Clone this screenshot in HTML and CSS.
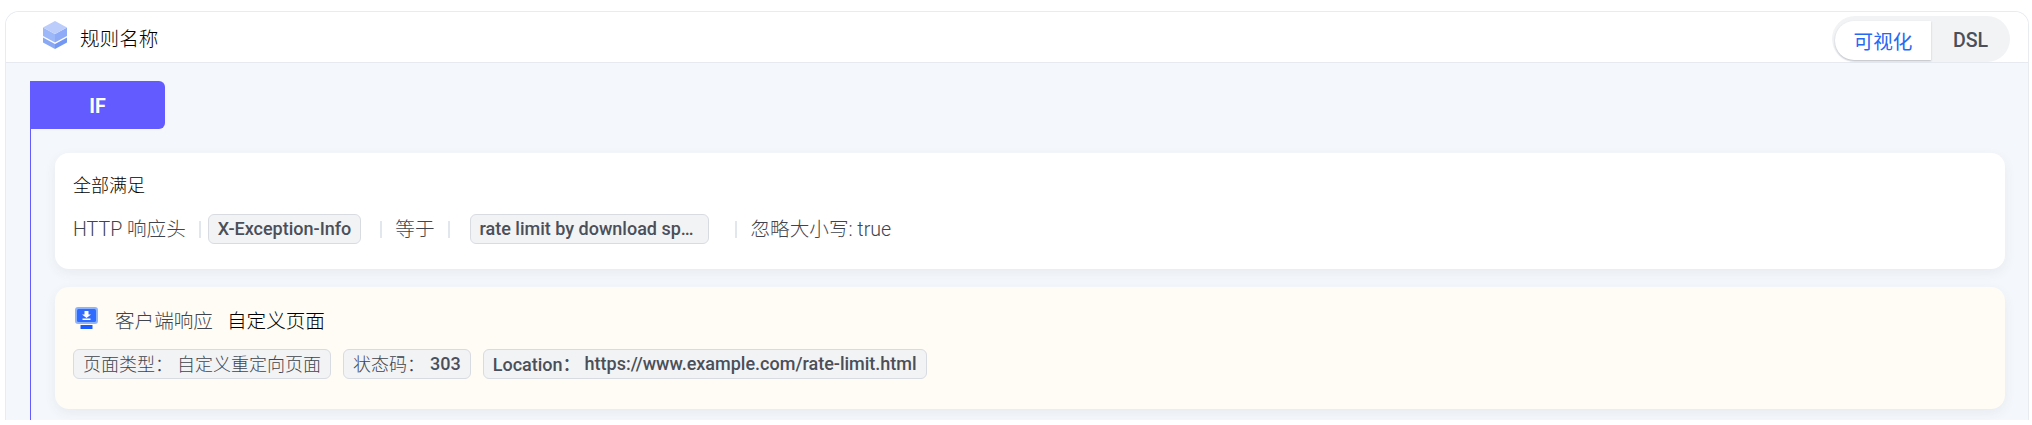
FILE: index.html
```html
<!DOCTYPE html>
<html lang="zh-CN">
<head>
  <meta charset="UTF-8">
  <title>规则详情</title>
  <link rel="stylesheet" href="styles.css">
</head>
<body>

<div class="rule-panel">
  <!-- Header -->
  <div class="rule-header">
    <div class="rule-title">
      <svg class="rule-icon" width="24" height="28" viewBox="0 0 24 28">
        <path d="M0 16.5 L12 23 L12 28 L0 21.5 Z" fill="#8aa9f5"/>
        <path d="M24 16.5 L12 23 L12 28 L24 21.5 Z" fill="#7398f3"/>
        <path d="M0 6.5 L12 13 L12 21.5 L0 15 Z" fill="#9db8f9"/>
        <path d="M24 6.5 L12 13 L12 21.5 L24 15 Z" fill="#8dabf7"/>
        <path d="M12 0 L24 6.5 L12 13 L0 6.5 Z" fill="#bccdfb"/>
      </svg>
      <span>规则名称</span>
    </div>
    <div class="view-switch">
      <div class="view-option active">可视化</div>
      <div class="view-option">DSL</div>
    </div>
  </div>

  <!-- Body -->
  <div class="rule-body">
    <div class="if-label">IF</div>
    <div class="if-branch">
      <div class="rule-card">
        <div class="card-title">全部满足</div>
        <div class="condition">
          <span class="cond-text">HTTP 响应头</span>
          <i class="sep sep-a"></i>
          <span class="tag">X-Exception-Info</span>
          <i class="sep sep-b"></i>
          <span class="cond-text">等于</span>
          <i class="sep sep-c"></i>
          <span class="tag tag-value">rate limit by download sp…</span>
          <i class="sep sep-d"></i>
          <span class="cond-text">忽略大小写: true</span>
        </div>
      </div>

      <div class="rule-card rule-card-action">
        <div class="action-title">
          <svg class="action-icon" width="23" height="22" viewBox="0 0 23 22">
            <rect x="0" y="0" width="23" height="17" rx="3" fill="#8fb4ff"/>
            <rect x="2" y="2" width="19" height="13" rx="1.5" fill="#2f6bff"/>
            <path d="M9.5 4 H13.5 V7.5 H16 L11.5 11 L7 7.500 H9.500 Z M7.500 11.500 H15.500 V13 H7.500 Z" fill="#fff"/>
            <rect x="5.500" y="18" width="12" height="4" rx="0.500" fill="#1a5cff"/>
          </svg>
          <span class="action-name">客户端响应</span>
          <span class="action-value">自定义页面</span>
        </div>
        <div class="tag-row">
          <span class="tag"><em>页面类型：</em><b class="tag-text">自定义重定向页面</b></span>
          <span class="tag"><em>状态码：</em><b>303</b></span>
          <span class="tag">Location：<b class="tag-url">https://www.example.com/rate-limit.html</b></span>
        </div>
      </div>
    </div>
  </div>
</div>

</body>
</html>
```
FILE: styles.css
```css
/* General styles */
html,
body {
  height: 100%;
}

body {
  margin: 0;
  padding: 11px 3px 6px 5px;
  box-sizing: border-box;
  background: #fff;
  font-family: Roboto, "Noto Sans CJK SC", sans-serif;
  overflow: hidden;
}

/* Outer panel */
.rule-panel {
  height: 408px;
  display: flex;
  flex-direction: column;
  border: 1px solid #e8ebf0;
  border-bottom: none;
  border-radius: 14px 14px 0 0;
  overflow: hidden;
}

/* Header */
.rule-header {
  height: 50px;
  flex: none;
  display: flex;
  align-items: center;
  justify-content: space-between;
  padding: 0 18px 0 37px;
  background: #fff;
  border-bottom: 1px solid #e6eaf0;
}

.rule-title {
  display: flex;
  align-items: center;
  gap: 13px;
  font-size: 19.6px;
  font-weight: 300;
  color: #000;
}

.rule-icon {
  margin-top: -4px;
}

/* View switch */
.view-switch {
  align-self: flex-end;
  display: flex;
  height: 46px;
  padding: 5px 0 2px;
  box-sizing: border-box;
  background: #f2f3f5;
  border-radius: 23px;
  font-size: 19.6px;
}

.view-option {
  width: 79px;
  display: flex;
  align-items: center;
  justify-content: center;
  color: #4a4f59;
  font-weight: 500;
}

.view-option.active {
  width: 96px;
  margin-left: 3px;
  background: #fff;
  color: #2568f5;
  font-weight: 400;
  border-radius: 19px 0 0 19px;
  box-shadow: 0 1px 2px rgba(60, 70, 90, 0.3);
}

/* Body */
.rule-body {
  flex: 1;
  padding: 18px 0 0 24px;
  background: #f4f7fb;
}

.if-label {
  width: 135px;
  height: 48px;
  padding-top: 3px;
  box-sizing: border-box;
  display: flex;
  align-items: center;
  justify-content: center;
  background: #635bff;
  color: #fff;
  font-size: 19.6px;
  font-weight: 700;
  border-radius: 0 6px 6px 0;
}

.if-branch {
  height: 290px;
  padding: 24px 23px 0 24px;
  border-left: 1px solid #635bff;
}

/* Cards */
.rule-card {
  padding: 20px 18px 0;
  height: 116px;
  box-sizing: border-box;
  background: #fff;
  border-radius: 14px;
  box-shadow: 0 4px 12px rgba(70, 90, 120, 0.07);
}

.rule-card-action {
  height: 122px;
  margin-top: 18px;
  padding-top: 18px;
  background: #fffcf5;
}

.card-title {
  font-size: 18px;
  font-weight: 300;
  line-height: 26px;
  color: #000;
}

.condition {
  display: flex;
  align-items: center;
  height: 30px;
  margin-top: 15px;
  font-size: 19.6px;
  color: #4a4f59;
}

.cond-text {
  margin-bottom: 3px;
  font-weight: 300;
  color: #3f444e;
}

.sep {
  width: 2px;
  height: 17px;
  background: #e2e6ed;
}

.sep-a {
  margin: 0 7px 0 13px;
}

.sep-b {
  margin: 0 13px 0 19px;
}

.sep-c {
  margin: 0 20px 0 13px;
}

.sep-d {
  margin: 0 14px 0 26px;
}

/* Tags */
.tag {
  display: inline-flex;
  align-items: center;
  height: 30px;
  box-sizing: border-box;
  padding: 0 9px 2px;
  background: #f2f3f5;
  border: 1px solid #d8dbe1;
  border-radius: 6px;
  font-size: 18px;
  font-weight: 500;
  color: #4a4f59;
  white-space: nowrap;
}

.tag-value {
  width: 239px;
}

.tag em {
  font-style: normal;
  font-weight: 300;
  color: #3f444e;
}

.tag b {
  margin-left: 5px;
  font-weight: 500;
}

.tag .tag-text {
  margin-left: 4px;
  font-weight: 300;
  color: #3f444e;
}

.tag .tag-url {
  margin-left: 4px;
}

/* Action block */
.action-title {
  display: flex;
  align-items: center;
  height: 28px;
  font-size: 19.6px;
}

.action-icon {
  margin: -3px 17px 0 2px;
}

.action-name {
  font-weight: 300;
  color: #3f444e;
}

.action-value {
  margin-left: 14px;
  font-weight: 300;
  color: #000;
}

.tag-row {
  display: flex;
  gap: 12px;
  margin-top: 16px;
}
```
